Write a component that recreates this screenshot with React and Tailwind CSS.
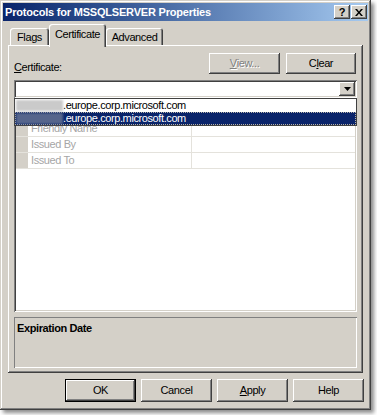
import React from 'react'

// Win2000-style 3D edges, drawn with inset shadows so they take no layout space
const raised =
  'shadow-[inset_-1px_-1px_#404040,inset_1px_1px_#ffffff,inset_-2px_-2px_#808080,inset_2px_2px_#d4d0c8]'
const sunken =
  'shadow-[inset_1px_1px_#808080,inset_-1px_-1px_#ffffff,inset_2px_2px_#404040,inset_-2px_-2px_#d4d0c8]'

function Button({ children, width = 'w-[71px]', height = 'h-[23px]', isDefault = false, disabled = false }) {
  return (
    <div
      className={[
        'flex items-center justify-center bg-[#d4d0c8]',
        width,
        height,
        isDefault
          ? 'border border-black shadow-[inset_-1px_-1px_#404040,inset_1px_1px_#ffffff,inset_-2px_-2px_#808080]'
          : raised,
        disabled ? 'text-[#808080] [text-shadow:1px_1px_0_#ffffff]' : 'text-black',
      ].join(' ')}
    >
      {children}
    </div>
  )
}

function Tab({ label, selected = false, width }) {
  return (
    <div
      className={[
        'flex items-center justify-center rounded-t-[3px] bg-[#d4d0c8] shadow-[inset_1px_1px_#ffffff,inset_-1px_0_#404040,inset_-2px_0_#808080]',
        width,
        selected ? 'relative z-10 -mb-[2px] h-[23px] pb-[2px]' : 'h-[17px] pt-[1px]',
      ].join(' ')}
    >
      {label}
    </div>
  )
}

const rows = ['Friendly Name', 'Issued By', 'Issued To']

export default function App() {
  return (
    <div className="h-[415px] w-[377px] overflow-hidden bg-white font-['Liberation_Sans',Arial,sans-serif] text-[11px] tracking-[-0.4px] text-black">
      <div
        className={[
          'flex h-[410px] w-[371px] flex-col bg-[#d4d0c8] p-[3px]',
          'shadow-[inset_-1px_-1px_#404040,inset_1px_1px_#d4d0c8,inset_-2px_-2px_#808080,inset_2px_2px_#ffffff,3px_3px_4px_rgba(0,0,0,0.45)]',
        ].join(' ')}
      >
        {/* title bar */}
        <div className="flex h-[18px] items-center justify-between bg-linear-to-r from-[#0a246a] to-[#a6caf0] pl-[2px] pr-[1px]">
          <span className="text-[11px] font-bold tracking-[-0.2px] text-white">
            Protocols for MSSQLSERVER Properties
          </span>
          <div className="flex gap-[1px]">
            <div className={`flex h-[14px] w-[16px] items-center justify-center bg-[#d4d0c8] text-[11px] font-bold leading-none ${raised}`}>
              ?
            </div>
            <div className={`flex h-[14px] w-[16px] items-center justify-center bg-[#d4d0c8] ${raised}`}>
              <svg width="8" height="7" viewBox="0 0 8 7">
                <path d="M0 0h2l2 2.5L6 0h2L5 3.5 8 7H6L4 4.5 2 7H0l3-3.5z" fill="#000" />
              </svg>
            </div>
          </div>
        </div>

        {/* tabs */}
        <div className="mt-[3px] flex h-[21px] items-end pl-[7px]">
          <Tab label="Flags" width="w-[39px]" />
          <Tab label="Certificate" width="w-[57px]" selected />
          <Tab label="Advanced" width="w-[57px]" />
        </div>

        {/* tab page */}
        <div className={`ml-[5px] flex h-[328px] w-[355px] flex-col bg-[#d4d0c8] px-[6px] pt-[8px] ${raised}`}>
          <div className="flex h-[21px] items-end justify-between">
            <span className="leading-[13px]">
              <span className="underline">C</span>ertificate:
            </span>
            <div className="mr-[1px] flex gap-[6px]">
              <Button width="w-[71px]" height="h-[21px]" disabled>
                <span className="underline">V</span>iew...
              </Button>
              <Button width="w-[70px]" height="h-[21px]">
                C<span className="underline">l</span>ear
              </Button>
            </div>
          </div>

          {/* combo box */}
          <div className={`mt-[6px] flex h-[18px] items-center justify-end bg-white pr-[2px] ${sunken}`}>
            <div className={`flex h-[14px] w-[16px] items-center justify-center bg-[#d4d0c8] ${raised}`}>
              <svg width="7" height="4" viewBox="0 0 7 4">
                <path d="M0 0h7L3.5 4z" fill="#000" />
              </svg>
            </div>
          </div>

          {/* property list with the open drop-down over it */}
          <div className={`relative h-[214px] bg-white p-[2px] ${sunken}`}>
            <div className="h-[21px]" />
            {rows.map((r) => (
              <div key={r} className="flex h-[16px] border-b border-[#e4e2dc]">
                <div className="w-[12px] bg-[#d4d0c8]" />
                <div className="flex w-[164px] items-center border-r border-[#e4e2dc] pl-[3px] text-[#a6a6a6]">
                  {r}
                </div>
                <div className="flex-1" />
              </div>
            ))}

            <div className="absolute left-0 right-0 top-0 h-[28px] border border-[#404040] bg-white">
              <div className="flex h-[13px] items-center">
                <div className="ml-[1px] h-[11px] w-[47px] bg-[#cacaca] blur-[1px]" />
                <span>.europe.corp.microsoft.com</span>
              </div>
              <div className="flex h-[13px] items-center border border-dotted border-[#b8b4a8] bg-[#0a246a] text-white">
                <div className="h-[11px] w-[47px] bg-[#56658c] blur-[1px]" />
                <span>.europe.corp.microsoft.com</span>
              </div>
            </div>
          </div>

          {/* expiration date description */}
          <div className="mt-[5px] h-[51px] pl-[3px] pt-[3px] font-bold shadow-[inset_1px_1px_#808080,inset_-1px_-1px_#ffffff]">
            Expiration Date
          </div>
        </div>

        {/* dialog buttons */}
        <div className="mt-[6px] flex justify-end gap-[5px] pr-[4px]">
          <Button isDefault>OK</Button>
          <Button>Cancel</Button>
          <Button>
            <span className="underline">A</span>pply
          </Button>
          <Button>Help</Button>
        </div>
      </div>
    </div>
  )
}
